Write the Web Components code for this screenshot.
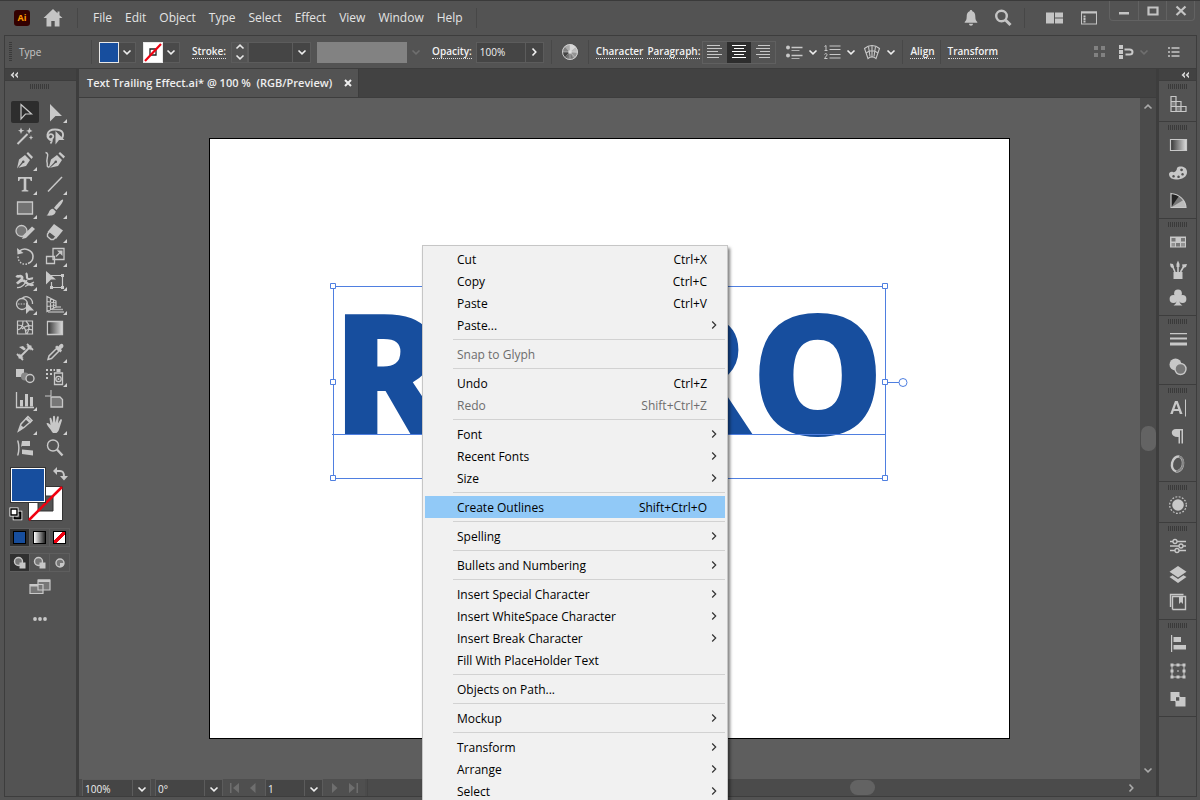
<!DOCTYPE html>
<html lang="en">
<head>
<meta charset="utf-8">
<title>Text Trailing Effect.ai</title>
<style>
html, body { margin: 0; height: 100%; overflow: hidden; background: #535353; }
body { font-family: "Open Sans", "Noto Sans", sans-serif; color: #e0e0e0; }
</style>
</head>
<body>
<ai-app>
  <ai-titlebar slot="title"></ai-titlebar>
  <ai-controlbar slot="controls"></ai-controlbar>
  <ai-toolbox slot="tools"></ai-toolbox>
  <ai-document slot="document">
    <ai-artwork></ai-artwork>
  </ai-document>
  <ai-dock slot="dock">
    <ai-dock-group icons="assets"></ai-dock-group>
    <ai-dock-group icons="gradient palette guide"></ai-dock-group>
    <ai-dock-group icons="swatches brushes symbols"></ai-dock-group>
    <ai-dock-group icons="strokes transparency"></ai-dock-group>
    <ai-dock-group icons="character paragraph opentype"></ai-dock-group>
    <ai-dock-group icons="appearance"></ai-dock-group>
    <ai-dock-group icons="properties layers libraries"></ai-dock-group>
    <ai-dock-group icons="alignpanel transformpanel pathfinder"></ai-dock-group>
  </ai-dock>
  <ai-context-menu slot="menu">
    <ai-menu-item keys="Ctrl+X">Cut</ai-menu-item>
    <ai-menu-item keys="Ctrl+C">Copy</ai-menu-item>
    <ai-menu-item keys="Ctrl+V">Paste</ai-menu-item>
    <ai-menu-item sub>Paste...</ai-menu-item>
    <ai-menu-line></ai-menu-line>
    <ai-menu-item disabled>Snap to Glyph</ai-menu-item>
    <ai-menu-line></ai-menu-line>
    <ai-menu-item keys="Ctrl+Z">Undo</ai-menu-item>
    <ai-menu-item keys="Shift+Ctrl+Z" disabled>Redo</ai-menu-item>
    <ai-menu-line></ai-menu-line>
    <ai-menu-item sub>Font</ai-menu-item>
    <ai-menu-item sub>Recent Fonts</ai-menu-item>
    <ai-menu-item sub>Size</ai-menu-item>
    <ai-menu-line></ai-menu-line>
    <ai-menu-item keys="Shift+Ctrl+O" active>Create Outlines</ai-menu-item>
    <ai-menu-line></ai-menu-line>
    <ai-menu-item sub>Spelling</ai-menu-item>
    <ai-menu-line></ai-menu-line>
    <ai-menu-item sub>Bullets and Numbering</ai-menu-item>
    <ai-menu-line></ai-menu-line>
    <ai-menu-item sub>Insert Special Character</ai-menu-item>
    <ai-menu-item sub>Insert WhiteSpace Character</ai-menu-item>
    <ai-menu-item sub>Insert Break Character</ai-menu-item>
    <ai-menu-item>Fill With PlaceHolder Text</ai-menu-item>
    <ai-menu-line></ai-menu-line>
    <ai-menu-item>Objects on Path...</ai-menu-item>
    <ai-menu-line></ai-menu-line>
    <ai-menu-item sub>Mockup</ai-menu-item>
    <ai-menu-line></ai-menu-line>
    <ai-menu-item sub>Transform</ai-menu-item>
    <ai-menu-item sub>Arrange</ai-menu-item>
    <ai-menu-item sub>Select</ai-menu-item>
  </ai-context-menu>
</ai-app>

<script>
const RESET = `
*, *::before { box-sizing: border-box; }
button, select, input { font: inherit; color: inherit; margin: 0; padding: 0; border: 0; background: none; border-radius: 0; outline: 0; }
button { display: flex; align-items: center; justify-content: center; }
`;

function define(name, css, html) {
  customElements.define(name, class extends HTMLElement {
    constructor() {
      super();
      const root = this.attachShadow({ mode: 'open' });
      const attr = (k) => this.getAttribute(k) || '';
      root.innerHTML = '<style>' + RESET + css + '</style>' + (typeof html === 'function' ? html(attr, this) : html);
    }
  });
}

const L = 'fill="none" stroke="currentColor"';
const GRAD = (id, a, b, rest) => `<linearGradient id="${id}" ${rest || ''}><stop offset="0" stop-color="${a}"/><stop offset="1" stop-color="${b}"/></linearGradient>`;

/* Every icon is drawn on a 22 x 22 grid. */
const ICONS = {
  home: '<path d="M11 2 1.500 11H4.500V19.500H9.300V14H12.700V19.500H17.500V11H20.500L17.500 8.200V4.500H15.500V6.300Z"/>',
  bell: '<path d="M11 3c.9 0 1.300.6 1.300 1.300C14.600 5 15.300 7 15.300 9.500c0 3 .7 4.200 2 5.500v.8H4.700V15c1.300-1.300 2-2.500 2-5.500C6.700 7 7.400 5 9.700 4.300 9.700 3.600 10.100 3 11 3ZM9 16.800h4c0 1.200-.8 2-2 2s-2-.8-2-2Z"/>',
  search: `<g ${L} stroke-width="2.400"><circle cx="9.500" cy="9" r="5.300"/><path d="M13.500 13 18.500 18" stroke-width="3"/></g>`,
  workspace: '<path d="M3 5.500h8v11H3zM12 5.500h8v5h-8zM12 11.500h8v5h-8z"/>',
  panel: `<rect x="3.500" y="5" width="15" height="12" ${L}/><path d="M3 4.500h16v2H3zM5.500 8.500h2v2h-2zM5.500 11h2v2h-2zM5.500 13.500h2v2h-2z"/>`,
  min: '<path d="M6 12h10v2.500H6z"/>',
  max: `<path d="M6.500 7.500h9v7h-9z" ${L} stroke-width="2.200"/>`,
  close: `<path d="M6.500 6.500 15.500 15M15.500 6.500 6.500 15" ${L} stroke-width="2.200"/>`,
  chev: `<path d="M7.500 9.500 11 12.800 14.500 9.500" ${L} stroke-width="1.600"/>`,
  up: `<path d="M7.500 12.500 11 9.200 14.500 12.500" ${L} stroke-width="1.600"/>`,
  right: `<path d="M9.500 7.500 12.800 11 9.500 14.500" ${L} stroke-width="1.600"/>`,
  arrow: `<path d="M9.200 7.500 12.700 11 9.200 14.500" ${L} stroke-width="1.200"/>`,
  stepper: `<path d="M7.500 7.500 11 4.200 14.500 7.500M7.500 14.500 11 17.800 14.500 14.500" ${L} stroke-width="1.600"/>`,
  collapse: '<path d="M11 7.800 7.500 11 11 14.200V12L9.800 11 11 10ZM15 7.800 11.500 11 15 14.200V12L13.800 11 15 10Z"/>',
  recolor: `<circle cx="11" cy="11" r="7.700" fill="#aaa"/><path d="M11 11 11 3.300A7.700 7.700 0 0 1 17 6.200Z" fill="#d8d8d8"/><path d="M11 11 17 6.200A7.700 7.700 0 0 1 18.600 12Z" fill="#bbb"/><path d="M11 11 18.600 12A7.700 7.700 0 0 1 14.500 17.800Z" fill="#959595"/><path d="M11 11 14.500 17.800A7.700 7.700 0 0 1 7 17.500Z" fill="#777"/><path d="M11 11 7 17.500A7.700 7.700 0 0 1 3.300 11Z" fill="#454545"/><path d="M11 11 3.300 11A7.700 7.700 0 0 1 6 5Z" fill="#818181"/><g fill="none" stroke="#d6d6d6" stroke-width=".9"><circle cx="11" cy="11" r="7.500"/><path d="M11 3.500v15M3.500 11h15M6 5.500 16 16.500M16 5.500 6 16.500" stroke-width=".5"/></g><circle cx="11" cy="11" r="1.800" fill="#ddd"/>`,
  left: `<path d="M3 4.500h13M3 7.500h15M3 10.500h11M3 13.500h15M3 16.500h12" ${L}/>`,
  center: `<path d="M4 4.500h14M6 7.500h10M4 10.500h14M6 13.500h10M4 16.500h14" ${L}/>`,
  rightal: `<path d="M6 4.500h12M4 7.500h14M8 10.500h10M4 13.500h14M7 16.500h11" ${L}/>`,
  bullets: `<circle cx="5" cy="6.500" r="2"/><circle cx="5" cy="14.500" r="2"/><path d="M8.500 6.500h11M8.500 14.500h11" ${L} stroke-width="1.500"/><path d="M8.500 9.500h8M8.500 17.500h8" ${L} stroke-width=".8"/>`,
  numbers: `<path d="M3.500 5.500 5 4.500V9.500M3.500 9.500h3M3.500 13.500c.5-1.500 3-1 2.500.6L3.500 17.500H6.500" ${L}/><path d="M8.500 5h11M8.500 8.500h11M8.500 13.500h11M8.500 17h11" ${L}/>`,
  envelope: `<g ${L} stroke-width="1.100"><path d="M3.500 7.500C8 3.500 14 3.500 18.500 7.500L15 17.500C12.500 15.500 9.500 15.500 7 17.500Z"/><path d="M5 12C9 9 13 9 17 12M11 4.500V16M7.500 5.500 9 15.500M14.500 5.500 13 15.500"/></g>`,
  dots4: '<g opacity=".4"><path d="M5 5h4v4H5zM12 5h4v4h-4zM5 12h4v4H5zM12 12h4v4h-4z"/></g>',
  snap: `<path d="M4 4h4v4H4zM4 9h4v4H4zM4 14h4v4H4z"/><path d="M9.500 8.500h5c4 0 4 5 0 5h-4" ${L} stroke-width="2"/>`,
  list: `<path d="M5 7h2M5 11h2M5 15h2M8.500 7h8M8.500 11h8M8.500 15h8" ${L} stroke-width="1.300"/>`,

  select: `<path d="M7 3.500 17.500 13H11.500L7 18Z" ${L} stroke-width="1.200"/>`,
  direct: '<path d="M6 3 18 15H11.500L6 20.500Z"/>',
  wand: `<path d="M3.500 19 13.500 9" ${L} stroke-width="2"/><path d="M7 2.500 8 5 10.500 5.500 8 6.500 7 9 6 6.500 4 5.500 6 5ZM15.500 2.500 16.500 5 18.500 6 16 7 15 9 14 6.500 12 6 14.500 5ZM17 10l.7 2 1.500.5-1.500.7-.7 1.800-.7-1.800-1.500-.7 1.500-.5Z"/>`,
  lasso: `<path d="M8 15.500C1 14 2 4.500 11 4.500S20 10 18 13.500M4.500 11C6 7.500 10.500 9.500 9 12.500S3 13.500 4.500 11M8 14c0 2 0 3.500-1.500 4.500" ${L} stroke-width="1.800"/><path d="M11.500 6 20.500 15H15L11.500 19.500Z"/>`,
  pen: '<path d="M3 19.500 5 10.500 11 6 16 11 12 17 4.500 18.800 9 14A1.300 1.300 0 1 0 8 13ZM12.500 4.500 14 3 19 8 17.500 10Z"/>',
  curve: `<path d="M1.500 3.500C6 4 2 10 3 13S2 18 5 18" ${L} stroke-width="1.400"/><path d="M4.500 19.500 7 10.500 13 6 18 11 14 17 6 18.800 11.500 14A1.300 1.300 0 1 0 10.500 13ZM14.500 4.500 16 3 21 7.500 19.500 9.500Z"/>`,
  type: '<path d="M4 4H18V8H16.700C16.500 6.300 16 5.700 14 5.700H12.300V16.300C12.300 17 13 17.300 14.300 17.300V18.500H7.700V17.300C9 17.300 9.700 17 9.700 16.300V5.700H8C6 5.700 5.500 6.300 5.300 8H4Z"/>',
  line: `<path d="M4 18.500 18 4" ${L} stroke-width="1.500"/>`,
  rect: `<path d="M3.500 5h15v12h-15z" fill="#737373" stroke="currentColor" stroke-width="1.300"/>`,
  brush: '<path d="M19 2.500C20 4 16 9.500 12.500 13L10 11C13 7 17.500 2 19 2.500ZM9 11.800 11.800 14.500C11 18.500 7 19 2.500 18.500 5.500 17 4.500 12 9 11.800Z"/>',
  shaper: `<circle cx="7.500" cy="10" r="5.500" fill="#777" stroke="currentColor" stroke-width="1.300"/><path d="M8 18 9.500 14 18 5.500 21 8 12 17Z"/>`,
  eraser: `<path d="M10 3 19 9.500 12 18 3.500 11Z"/><path d="M5.500 10.500 12 15.500 9.500 18.500H7L3.500 15.500V13Z" fill="#535353" stroke="currentColor" stroke-width="1.400"/>`,
  rotate: `<path d="M5 6.500C10 1.500 19 5 19 11.500c0 3-2 6-5 7" ${L} stroke-width="1.600"/><path d="M13 19C8 20 4 17 4 11" ${L} stroke-width="1.400" stroke-dasharray="1.500 1.500"/><path d="M3 3 3.500 9.500 9.500 8Z"/>`,
  scale: `<g ${L} stroke-width="1.300"><path d="M9 3.500h11v11H9zM2.500 11.500h8v7h-8z"/><path d="M12 11.500 16.500 7"/></g><path d="M13 5.500h5.500V11Z"/>`,
  width: `<path d="M2.500 6.500C4 9 6.500 5.500 8 8S5 12 3 14.500C7 11 9.500 11 11 12.500S15 17 19.500 15.500" ${L} stroke-width="2.600"/><path d="M12 4c2 2 0 4 1.500 5.500S17 9 19 9.500" ${L} stroke-width="2.200"/><path d="M3 18.500C7 19 10 17 13 11M11 17.500 20 13" ${L} stroke-width="1.300"/>`,
  free: `<path d="M7 6.500h11.500v12H7.500V13" ${L} stroke-width="1.200"/><path d="M17 5h3v3h-3zM17 17h3v3h-3zM6 17h3v3H6zM2 2 12 10.500H7L2 15.500Z"/>`,
  builder: `<g ${L} stroke-width="1.300"><circle cx="8" cy="11" r="5.500"/><path d="M8 5.500C12 1.500 19 5 18.500 11"/></g><path d="M4 11h9" ${L} stroke-dasharray="1.500 1.200"/><path d="M12 9 20 17.500H15.500L12 21Z"/>`,
  perspective: `<path d="M3 3.500 12 8V14L3 18.500ZM6.500 5v12M9.500 7v8M3 8.500 12 10M3 13.500 12 12" ${L} stroke-width="1.200"/><path d="M12 14h5M8 16.500h11M4 19h16" ${L} stroke-width="1.500" opacity=".75"/>`,
  mesh: `<g ${L} stroke-width="1.200"><path d="M3.500 4h15v13h-15z"/><path d="M3.500 13C8 12 9 8 9 4M3.500 8C8 8 12 10 12 17M12 4c4 4 4 8 1 13M8 12c3-3 7-4 10.500-3M11 14c3-2 5-2 7.500-1"/></g>`,
  gradtool: `<defs>${GRAD('g1', '#333', '#ddd')}</defs><path d="M3.500 4.500h15v13h-15z" fill="url(#g1)" stroke="currentColor" stroke-width="1.300"/>`,
  measure: `<path d="M5 17 17 5M3 13 9 19M13 3 19 9" ${L} stroke-width="1.800"/><path d="M4.500 17.500 5.500 12.500 9.500 16.500ZM17.500 4.500 12.500 5.500 16.500 9.500ZM5 6l4-1 3 3-2 1.500Z"/>`,
  dropper: `<path d="M4 18.500 5 15 12.500 7.500 15 10 7.500 17.500Z" ${L} stroke-width="1.500"/><path d="M11 6 13 4.500 14.500 5.500C16 2.500 18 2 19 3.500S19.500 6.500 17 8L18 9.500 16.500 11.500Z"/>`,
  blend: `<path d="M2 4h8v8H2z"/><circle cx="11" cy="11.500" r="4" fill="#888"/><circle cx="16" cy="13.500" r="4" fill="#535353" stroke="currentColor" stroke-width="1.400"/>`,
  spray: `<g ${L} stroke-width="1.300"><path d="M10.500 8h8v11.500h-8z"/><circle cx="14.500" cy="14" r="2.700"/></g><circle cx="14.500" cy="14" r="1"/><path d="M12.500 4h4v3h-4zM2 4h2v2H2zM6 4h2v2H6zM2 8h2v2H2zM6 8h2v2H6zM2 12h2v2H2zM9.500 4h1.500v2H9.500z"/>`,
  graph: `<path d="M2.500 3v15.500H20" ${L} stroke-width="1.300"/><path d="M6 11h3v6.500H6zM11 5h3v12.500h-3zM16 8h3v9.500h-3z"/>`,
  artboard: `<path d="M7 1v6H1" ${L}/><path d="M7 8h9l2.500 2.500V18H7Z" fill="#777" stroke="currentColor" stroke-width="1.300"/>`,
  slice: `<path d="M4.500 18 7 11 14 3.500 18 7.500 10 14.500Z" ${L} stroke-width="1.500"/><path d="M4 19 7 12.500 10 14.500Z"/><path d="m12 5 5 4.500" ${L} stroke-width="2.500"/>`,
  hand: '<path d="M6.500 16.500C4.500 14 3 12 2.500 10.500c1-1 2.500-.3 4 1.500L5.500 5.500c.5-1 1.700-.8 2 .3L8.800 10 9 3.500c.5-1.200 1.900-1 2 .2l.5 6 1.500-6c.6-.9 1.800-.6 1.800.6L14 10.500l2.300-4c.9-.7 1.900 0 1.600 1L15.500 15c-.5 2-1.500 4-3 5H9C8 19 7.500 18 6.500 16.500Z"/>',
  columns: '<path d="M3 3.500c1.500 5 1.500 10 0 15h1.500c1.500-5 1.500-10 0-15ZM8 4h8v5H8l-1 1ZM8 12.500l11 1V18.500L8 17Z"/>',
  zoom: `<circle cx="9" cy="8.500" r="5.500" ${L} stroke-width="1.400"/><path d="M13 12.500 18.500 18.500" ${L} stroke-width="2.300"/>`,
  swap: `<path d="M7 8h4c3 0 4 1.500 4 6" ${L} stroke-width="2"/><path d="M8 4v8L4 8ZM11 13h8l-4 4.500Z"/>`,
  defaults: `<path d="M9.500 9.500h6v6h-6z" fill="none" stroke="#fff" stroke-width="3.500"/><path d="M9.500 9.500h6v6h-6z" fill="#535353" stroke="#000" stroke-width="2"/><path d="M6 6h6v6H6z" fill="#fff" stroke="#fff" stroke-width="3"/><path d="M6 6h6v6H6z" fill="#fff" stroke="#000" stroke-width="1.400"/>`,
  normal: `<circle cx="9.500" cy="9.500" r="4" fill="#777" stroke="currentColor" stroke-width="1.400"/><path d="M10.500 10.500h6v6h-6z"/>`,
  inside: `<circle cx="11" cy="11" r="4" fill="#777" stroke="currentColor" stroke-width="1.400"/><path d="M11 11h4a4 4 0 0 1-4 4Z"/>`,
  screens: `<path d="M1 8.500h13v9H1zM9 4h12v10H9z" fill="#777" stroke="currentColor" stroke-width="1.200"/><path d="M1 8.500h8v2H1zM9 3.500h12V6H9z"/>`,
  more: '<circle cx="6" cy="11" r="1.900"/><circle cx="11" cy="11" r="1.900"/><circle cx="16" cy="11" r="1.900"/>',

  assets: `<path d="M4 3.500h5v5H4zM4 8.500h5v5H4zM9 8.500h5v5H9zM4 13.500h5v5H4zM9 13.500h5v5H9zM14 13.500h5v5h-5z" ${L} stroke-width="1.200"/><path d="M9 13.500h5v5H9zM4 8.500h5v5H4z" fill-opacity=".35"/>`,
  gradient: `<defs>${GRAD('g2', '#333', '#ddd')}</defs><path d="M3.500 5.500h16v11h-16z" fill="url(#g2)" stroke="currentColor" stroke-width="1.200"/>`,
  palette: '<path fill-rule="evenodd" d="M10 6C12 3.500 19.500 4 20 9.500S15 17.500 9 17.500 2 13.500 2 12s2-3 4-2 4-2 4-4ZM6.500 13a1.300 1.300 0 1 0 .1 0ZM11.500 13.500a1.300 1.300 0 1 0 .1 0ZM15.500 11a1.300 1.300 0 1 0 .1 0ZM14.500 6.500a1.400 1.400 0 1 0 .1 0Z"/>',
  guide: `<path d="M4 3.500C12 4 18.500 10 19 17.500H4Z" fill="#222"/><path d="M4 17.500 12 6C16 9 18.500 13 19 17.500Z" fill="#777"/><path d="M4 17.500 16.500 10C18 12 19 14 19 17.500Z" fill="#bbb"/><path d="M4 3.500C12 4 18.500 10 19 17.500H4Z" ${L} stroke-width="1.200"/>`,
  swatches: '<path d="M3 5.500h16v11H3z"/><path d="M4.500 7h4v3.500h-4zM14 7h4v3.500h-4zM9 12h4v3.500H9z" fill="#777"/><path d="M4.500 12h3.500v3.500H4.500zM14 12h4v3.500h-4z" fill="#929292"/>',
  brushes: `<path d="M6.500 13h9v7h-9z"/><path d="M8 13 5 6M11 13V5M13.500 13 17 7" ${L} stroke-width="1.600"/><path d="M3 4.500 6 5 7 8 5 9 3.500 7.500ZM9.500 5 11 1.500 12.500 5V8h-3ZM15 5.500 20 5 19 8 16 9Z"/>`,
  symbols: '<circle cx="11" cy="6.500" r="3.900"/><circle cx="6.500" cy="12" r="3.900"/><circle cx="15.500" cy="12" r="3.900"/><path d="M10 9h2c0 5 .5 8 3.500 9.500h-9C9.500 17 10 14 10 9Z"/>',
  strokes: '<path d="M3 5h17v1.200H3zM3 9.500h17v2H3zM3 14.500h17v3H3z"/>',
  transparency: `<circle cx="8.500" cy="8.500" r="6"/><circle cx="13.500" cy="13" r="5.500" fill="#777" stroke="currentColor" stroke-width="1.400"/>`,
  character: `<path fill-rule="evenodd" d="M8 4h2.700L15.500 17h-2.700l-1-3H6.700l-1 3H3.200ZM7.500 12h3.600L9.300 6.800Z"/><path d="M18.500 2.500v17" ${L}/>`,
  paragraph: '<path d="M9 4h7v14.500h-1.500V5.500H13V18.500H11.500V12C3 12.500 3 4 9 4Z"/>',
  opentype: `<ellipse cx="10.500" cy="11" rx="5.500" ry="7.500" transform="rotate(12 10.500 11)" ${L} stroke-width="2.400"/><path d="M12 3.500C18 5 18 17 9 18.500" fill="none" stroke="#858585" stroke-width="2"/>`,
  appearance: `<circle cx="11" cy="11" r="5.800"/><circle cx="11" cy="11" r="8.300" ${L} stroke-width="1.200" stroke-dasharray="1.800 1.500"/>`,
  properties: `<g ${L} stroke-width="1.300"><path d="M3 6.500h3M10 6.500h9M3 11h9M16 11h3M3 15.500h5M12 15.500h7"/><circle cx="8" cy="6.500" r="2"/><circle cx="14" cy="11" r="2"/><circle cx="10" cy="15.500" r="2"/></g>`,
  layers: '<path d="M11 3 19.500 8.700 11 14.400 2.500 8.700ZM5.500 12.300 11 16 16.500 12.300 19.500 14 11 20 2.500 14Z"/>',
  libraries: `<path d="M3.500 16V3.500h13M5.500 18.500V5.500h13v13h-13" ${L} stroke-width="1.400"/><path d="M12 6h4v7l-2-2-2 2Z"/>`,
  alignpanel: '<path d="M4 3h1.200v17H4zM6.500 5h7.500v5H6.500zM6.500 13H19v4.500H6.500z"/>',
  transformpanel: `<path d="M5 5h12v12H5z" ${L}/><path d="M3.500 3.500h3v3h-3zM9.500 3.500h3v3h-3zM15.500 3.500h3v3h-3zM3.500 9.500h3v3h-3zM15.500 9.500h3v3h-3zM3.500 15.500h3v3h-3zM9.500 15.500h3v3h-3zM15.500 15.500h3v3h-3zM10.300 10.300h1.400v1.400h-1.400z"/>`,
  pathfinder: `<path d="M3.500 4h9v9h-9zM8.500 9h10v9.500h-10z"/><path d="M8.500 8.700h4.300v4.500H8.500z" fill="#535353" stroke="#ddd" stroke-width=".8"/>`,
  first: '<path d="M6 6h1.500v10H6zM15 6v10l-6-5Z"/>',
  prev: '<path d="M13.500 6v10L8 11Z"/>',
  next: '<path d="M8 6v10l5.500-5Z"/>',
  last: '<path d="M7 6v10l6-5ZM14.500 6H16v10h-1.500z"/>'
};

define('ai-icon',
  ':host { display: block; flex: none; width: 22px; height: 22px; } svg { display: block; }',
  (a) => `<svg width="22" height="22" viewBox="0 0 22 22" fill="currentColor" aria-hidden="true">${ICONS[a('name')]}</svg>`);

define('ai-grip', `
:host { display: flex; justify-content: center; }
i { width: 20px; height: 5px; background: repeating-linear-gradient(90deg, #3a3a3a 0 1px, transparent 1px 2px); }
:host([vertical]) i { width: 3px; height: 20px; background: repeating-linear-gradient(#3a3a3a 0 1px, transparent 1px 2px); }
`, '<i></i>');

/* Drop-down with its value in one cell and the chevron in the next. */
define('ai-combo', `
:host { display: block; flex: none; height: 21px; font-size: 10px; }
div { display: grid; grid-template-columns: 1fr 18px; height: 100%; background: #454545; border: 1px solid #5c5c5c; }
select { grid-area: 1 / 1 / 2 / 3; appearance: none; padding: 0 20px 0 2px; color: #f0f0f0; }
span { grid-area: 1 / 2; border-left: 1px solid #5c5c5c; display: flex; align-items: center; justify-content: center; pointer-events: none; color: #eee; overflow: hidden; }
`, (a) => `<div><select aria-label="${a('label')}"><option>${a('value')}</option></select><span><ai-icon name="chev"></ai-icon></span></div>`);

define('ai-app', `
:host { display: grid; grid-template-rows: 34px 34px minmax(0, 1fr); height: 100vh; padding: 0 3px 3px 4px; position: relative; overflow: hidden; background: #535353; border-top: 1px solid #3a3a3a; box-sizing: border-box; }
main { display: grid; grid-template-columns: 71px minmax(0, 1fr) 37px; gap: 3px; background: #3d3d3d; border: 1px solid #3d3d3d; border-top: 0; min-height: 0; }
::slotted([slot=menu]) { position: absolute; left: 422px; top: 244px; }
`, '<slot name="title"></slot><slot name="controls"></slot><main><slot name="tools"></slot><slot name="document"></slot><slot name="dock"></slot></main><slot name="menu"></slot>');

define('ai-titlebar', `
:host { display: flex; align-items: center; height: 33px; padding-left: 10px; color: #c4c4c4; position: relative; box-sizing: border-box; }
.logo { width: 16px; height: 16px; border-radius: 3px; background: #330000; color: #ff9a00; font: bold 9px/16px "Open Sans", sans-serif; text-align: center; }
.home { margin-left: 12px; }
.rule { width: 1px; height: 20px; background: #474747; }
.rule.a { margin: 0 0 0 13px; }
nav { display: flex; gap: 13px; margin: 0 13px 0 15px; font-size: 12px; color: #e4e4e4; }
.space { flex: 1; }
.tools { display: flex; align-items: center; gap: 10px; margin-right: 97px; }
.tools .rule { margin-right: 8px; }
.tools button + button.wide { margin-left: 3px; }
.window { position: absolute; right: 2px; top: 0; display: grid; grid-template-columns: repeat(3, 28px); height: 20px; border: 1px solid #626262; border-top: 0; border-radius: 0 0 4px 4px; }
.window button { border-left: 1px solid #626262; height: 19px; overflow: hidden; }
.window button:first-child { border: 0; }
`, () => `
<span class="logo">Ai</span>
<button class="home" aria-label="Home"><ai-icon name="home"></ai-icon></button>
<span class="rule a"></span>
<nav>${['File', 'Edit', 'Object', 'Type', 'Select', 'Effect', 'View', 'Window', 'Help'].map((t) => `<button>${t}</button>`).join('')}</nav>
<span class="rule"></span><span class="space"></span>
<div class="tools"><button aria-label="Notifications"><ai-icon name="bell"></ai-icon></button><button aria-label="Search"><ai-icon name="search"></ai-icon></button><span class="rule"></span><button aria-label="Workspace"><ai-icon name="workspace"></ai-icon></button><button class="wide" aria-label="Panels"><ai-icon name="panel"></ai-icon></button></div>
<div class="window"><button aria-label="Minimize"><ai-icon name="min"></ai-icon></button><button aria-label="Maximize"><ai-icon name="max"></ai-icon></button><button aria-label="Close"><ai-icon name="close"></ai-icon></button></div>`);

define('ai-controlbar', `
:host { display: flex; align-items: center; height: 34px; padding-left: 4px; border: 1px solid #3d3d3d; font-size: 10px; color: #c8c8c8; box-sizing: border-box; }
.name { width: 79px; padding-left: 7px; }
.rule { width: 1px; height: 24px; background: #484848; margin: 0 7px; }
.name + .rule { margin: 0; }
.pair { display: flex; height: 21px; margin-left: 7px; }
.pair .swatch { width: 20px; border: 1px solid #e8e8e8; background: #174e9e; }
.pair .none { background: #fff; }
.none svg { display: block; }
.pair .drop { width: 17px; background: #4a4a4a; border: 1px solid #5c5c5c; border-left: 0; color: #eee; overflow: hidden; }
.lab { color: #f2f2f2; font-weight: 600; height: 14px; line-height: 13px; border-bottom: 1px dotted #e0e0e0; white-space: nowrap; }
.step { width: 17px; height: 21px; border: 1px solid #5c5c5c; margin-left: 5px; color: #e8e8e8; overflow: hidden; }
.gray { width: 90px; height: 21px; background: #828282; margin-left: 6px; }
.dim { display: flex; justify-content: center; color: #6f6f6f; width: 18px; overflow: hidden; }
.op { display: grid; grid-template-columns: 49px 17px; height: 21px; margin-left: 4px; border: 1px solid #5c5c5c; background: #454545; color: #f2f2f2; }
.op input { min-width: 0; padding-left: 3px; border-right: 1px solid #5c5c5c; }
.op button { overflow: hidden; }
.align { display: flex; margin-left: 2px; border: 1px solid #606060; height: 23px; }
.align button { width: 24px; overflow: hidden; }
.align .on { background: #2d2d2d; color: #fff; }
.more { display: flex; }
.more button + button { width: 16px; overflow: hidden; color: #eee; }
.space { flex: 1; }
`, `
<ai-grip vertical></ai-grip><span class="name">Type</span><span class="rule"></span>
<div class="pair"><button class="swatch" aria-label="Fill"></button><button class="drop" aria-label="Fill options"><ai-icon name="chev"></ai-icon></button></div>
<div class="pair"><button class="swatch none" aria-label="Stroke"><svg width="18" height="19" viewBox="0 0 18 19"><path d="M6 6h6v6H6z" fill="none" stroke="#222" stroke-width="1.300"/><path d="M1 18 17 1" stroke="#f00010" stroke-width="2.200"/></svg></button><button class="drop" aria-label="Stroke options"><ai-icon name="chev"></ai-icon></button></div>
<button class="lab" style="margin-left:12px">Stroke:</button>
<button class="step" aria-label="Stroke weight step"><ai-icon name="stepper"></ai-icon></button>
<ai-combo style="width:63px" label="Stroke weight" value=""></ai-combo>
<span class="gray"></span><span class="dim"><ai-icon name="chev"></ai-icon></span>
<button class="lab" style="margin-left:7px">Opacity:</button>
<div class="op"><input aria-label="Opacity" value="100%"><button aria-label="Opacity slider"><ai-icon name="right"></ai-icon></button></div>
<span class="rule"></span>
<button aria-label="Recolor"><ai-icon name="recolor"></ai-icon></button>
<span class="rule"></span>
<button class="lab">Character</button>
<button class="lab" style="margin-left:4px">Paragraph:</button>
<div class="align"><button aria-label="Align left"><ai-icon name="left"></ai-icon></button><button class="on" aria-label="Align center"><ai-icon name="center"></ai-icon></button><button aria-label="Align right"><ai-icon name="rightal"></ai-icon></button></div>
<div class="more" style="margin-left:7px"><button aria-label="Bullets"><ai-icon name="bullets"></ai-icon></button><button aria-label="Bullet options"><ai-icon name="chev"></ai-icon></button></div>
<div class="more"><button aria-label="Numbering"><ai-icon name="numbers"></ai-icon></button><button aria-label="Numbering options"><ai-icon name="chev"></ai-icon></button></div>
<div class="more" style="margin-left:2px"><button aria-label="Envelope"><ai-icon name="envelope"></ai-icon></button><button aria-label="Envelope options"><ai-icon name="chev"></ai-icon></button></div>
<span class="rule" style="margin-left:3px"></span>
<button class="lab">Align</button>
<span class="rule" style="margin-left:5px"></span>
<button class="lab">Transform</button>
<span class="space"></span>
<ai-icon name="dots4"></ai-icon>
<ai-icon name="snap" style="margin-left:4px"></ai-icon><span class="dim" style="width:14px"><ai-icon name="chev"></ai-icon></span>
<ai-icon name="list" style="margin:0 11px 0 12px"></ai-icon>`);

const TOOLS = ['select', 'direct', 'wand', 'lasso', 'pen', 'curve', 'type', 'line', 'rect', 'brush', 'shaper', 'eraser', 'rotate', 'scale', 'width', 'free', 'builder', 'perspective', 'mesh', 'gradtool', 'measure', 'dropper', 'blend', 'spray', 'graph', 'artboard', 'slice', 'hand', 'columns', 'zoom'];
const PLAIN = ['select', 'wand', 'lasso', 'curve', 'mesh', 'gradtool', 'measure', 'blend', 'artboard', 'columns', 'zoom'];

define('ai-toolbox', `
:host { display: block; background: #535353; color: #c8c8c8; min-width: 0; }
header { height: 12px; background: #424242; border-bottom: 1px solid #3d3d3d; overflow: hidden; display: flex; align-items: center; color: #d8d8d8; }
header ai-icon { margin-left: -2px; }
ai-grip { padding: 3px 2px 12px 0; }
.grid { display: grid; grid-template-columns: 28px 28px; gap: 2px; padding-left: 6px; }
.grid button { height: 22px; position: relative; border-radius: 2px; }
.grid .on { background: #2d2d2d; }
.grid .sub::before { content: ""; position: absolute; right: 2px; bottom: 0; border: 2px solid transparent; border-right-color: #d0d0d0; border-bottom-color: #d0d0d0; }
.colors { position: relative; height: 53px; margin: 9px 6px 0; }
.colors > * { position: absolute; }
.fill { left: 0; top: 0; width: 34px; height: 34px; background: #174e9e; border: 1px solid #fff; box-shadow: 0 0 0 1px #333; }
.stroke { left: 17px; top: 18px; }
.swap { left: 38px; top: -5px; }
.def { left: -6px; top: 35px; }
.row { display: grid; grid-template-columns: repeat(3, 20px); margin: 7px 5px 0; height: 19px; }
.row + .row { margin-top: 6px; }
.row button { border: 1px solid #5e5e5e; border-left: 0; overflow: hidden; }
.row .on { background: #303030; }
.chip { width: 13px; height: 13px; border: 1px solid #000; }
.one { width: 58px; height: 22px; margin: 4px 0 0 6px; }
.one.dots { margin-top: 10px; }
`, `
<header><ai-icon name="collapse"></ai-icon></header>
<ai-grip></ai-grip>
<div class="grid">${TOOLS.map((t) => `<button aria-label="${t} tool" class="${t === 'select' ? 'on' : PLAIN.includes(t) ? '' : 'sub'}"><ai-icon name="${t}"></ai-icon></button>`).join('')}</div>
<div class="colors">
  <button class="stroke" aria-label="Stroke color"><svg width="35" height="35" viewBox="0 0 35 35"><path d="M.5.5h34v34H.5z" fill="#fff" stroke="#333"/><path d="M10 10h15v15H10z" fill="#535353" stroke="#333"/><path d="M1 34 34 1" stroke="#f00010" stroke-width="2.500"/></svg></button>
  <button class="fill" aria-label="Fill color"></button>
  <button class="swap" aria-label="Swap fill and stroke"><ai-icon name="swap"></ai-icon></button>
  <button class="def" aria-label="Default fill and stroke"><ai-icon name="defaults"></ai-icon></button>
</div>
<div class="row"><button class="on" aria-label="Color"><span class="chip" style="background:#174e9e"></span></button><button aria-label="Gradient"><span class="chip" style="background:linear-gradient(90deg,#fff,#222)"></span></button><button aria-label="None"><span class="chip" style="background:linear-gradient(to bottom right,#fff 38%,#f00010 38% 62%,#fff 62%)"></span></button></div>
<div class="row"><button class="on" aria-label="Draw normal"><ai-icon name="normal"></ai-icon></button><button aria-label="Draw behind"><ai-icon name="normal"></ai-icon></button><button aria-label="Draw inside"><ai-icon name="inside"></ai-icon></button></div>
<button class="one" aria-label="Screen mode"><ai-icon name="screens"></ai-icon></button>
<button class="one dots" aria-label="Edit toolbar"><ai-icon name="more"></ai-icon></button>`);

define('ai-document', `
:host { display: grid; grid-template-rows: 29px minmax(0, 1fr) 17px; background: #424242; min-width: 0; min-height: 0; }
.tabs { display: flex; border-bottom: 1px solid #3d3d3d; }
.tab { display: flex; align-items: center; gap: 8px; background: #535353; padding: 0 2px 1px 8px; font-size: 11px; font-weight: 600; color: #eee; border-right: 1px solid #3d3d3d; white-space: pre; }
.tab button { width: 16px; height: 16px; }
.view { display: grid; grid-template-columns: minmax(0, 1fr) 16px; min-height: 0; }
.canvas { background: #5e5e5e; display: flex; align-items: center; justify-content: center; overflow: hidden; }
.vbar { background: #4b4b4b; display: flex; flex-direction: column; align-items: center; color: #aaa; min-width: 0; }
.vbar ai-icon { height: 18px; display: flex; align-items: center; }
.vbar i { width: 15px; height: 25px; border-radius: 7px; background: #636363; }
.vbar b { flex: 1; }
.status { display: flex; background: #4b4b4b; color: #aaa; overflow: hidden; padding-left: 3px; }
.status ai-combo { height: 19px; }
.nav { display: flex; width: 42px; justify-content: center; background: #4f4f4f; color: #6e6e6e; overflow: hidden; }
.nav button { width: 18px; height: 17px; overflow: hidden; }
.track { flex: 1; display: flex; align-items: center; border-left: 1px solid #444; margin-left: 2px; padding-right: 14px; overflow: hidden; }
.track i { width: 25px; height: 15px; border-radius: 8px; background: #636363; }
`, `
<div class="tabs" role="tablist"><div class="tab" role="tab"><span>Text Trailing Effect.ai* @ 100 %  (RGB/Preview)</span><button aria-label="Close document"><svg width="8" height="8" viewBox="0 0 8 8"><path d="M1 1 7 7M7 1 1 7" stroke="#eee" stroke-width="2"/></svg></button></div></div>
<div class="view"><div class="canvas"><slot></slot></div><div class="vbar"><ai-icon name="up"></ai-icon><b></b><i></i><b></b><ai-icon name="chev"></ai-icon></div></div>
<div class="status">
<ai-combo style="width:69px" label="Zoom" value="100%"></ai-combo>
<ai-combo style="width:68px;margin-left:4px" label="Rotation" value="0°"></ai-combo>
<div class="nav"><button aria-label="First"><ai-icon name="first"></ai-icon></button><button aria-label="Previous"><ai-icon name="prev"></ai-icon></button></div>
<ai-combo style="width:58px" label="Artboard" value="1"></ai-combo>
<div class="nav"><button aria-label="Next"><ai-icon name="next"></ai-icon></button><button aria-label="Last"><ai-icon name="last"></ai-icon></button></div>
<div class="track"><b style="flex:483"></b><i></i><b style="flex:245"></b><ai-icon name="right"></ai-icon></div>
</div>`);

define('ai-artwork', `
:host { display: block; flex: none; width: 801px; height: 601px; background: #fff; border: 1px solid #000; position: relative; box-sizing: border-box; }
.sel { position: absolute; left: 120px; top: 143px; }
.sel svg { display: block; position: relative; }
.word { position: absolute; left: 2px; top: 4px; font-family: "Open Sans", "Noto Sans", sans-serif; font-size: 168px; line-height: 167px; font-weight: 800; color: #174e9e; white-space: nowrap; }
`, `
<div class="sel"><span class="word">RETRO</span>
<svg width="580" height="202" viewBox="0 0 580 202" fill="none" stroke="#4f7fe0"><path d="M3.500 4.500h552v192h-552zM2 152.500h554M556 100.500h14"/><g fill="#fff"><path d="M.5 1.500h5v5h-5zM.5 97.500h5v5h-5zM.5 193.500h5v5h-5zM552.500 1.500h5v5h-5zM552.500 97.500h5v5h-5zM552.500 193.500h5v5h-5z"/><circle cx="573" cy="100.500" r="4"/></g></svg></div>`);

define('ai-dock', `
:host { display: block; background: #535353; min-width: 0; }
header { height: 12px; background: #424242; border-bottom: 1px solid #3d3d3d; overflow: hidden; display: flex; align-items: center; justify-content: flex-end; color: #d8d8d8; }
`, '<header><ai-icon name="collapse"></ai-icon></header><slot></slot>');

define('ai-dock-group', `
:host { display: block; border-bottom: 1px solid #3d3d3d; padding-bottom: 3px; color: #c8c8c8; }
ai-grip { height: 9px; padding-top: 3px; }
button { width: 100%; height: 28px; }
`, (a) => '<ai-grip></ai-grip>' + a('icons').split(' ').map((n) => `<button aria-label="${n}"><ai-icon name="${n}"></ai-icon></button>`).join(''));

define('ai-context-menu', `
:host { display: block; width: 306px; padding: 2px; background: #f1f1f1; border: 1px solid #c6c6c6; box-shadow: 2px 3px 3px rgba(0,0,0,.5); color: #000; font-size: 12px; box-sizing: border-box; }
`, '<div role="menu"><slot></slot></div>');

define('ai-menu-item', `
:host { display: block; }
button { width: 100%; height: 22px; padding: 0 0 0 32px; justify-content: flex-start; }
.label { flex: 1; text-align: left; }
.keys { padding-right: 18px; }
:host([disabled]) button { color: #6d6d6d; }
:host([active]) button { background: #91c9f7; }
ai-icon { color: #333; }
`, (a, el) => `<button role="menuitem"${el.hasAttribute('disabled') ? ' disabled' : ''}><span class="label"><slot></slot></span>${a('keys') ? `<span class="keys">${a('keys')}</span>` : ''}${el.hasAttribute('sub') ? '<ai-icon name="arrow"></ai-icon>' : ''}</button>`);

define('ai-menu-line', ':host { display: block; height: 7px; padding: 3px 0 0 28px; box-sizing: border-box; } i { display: block; height: 1px; background: #d2d2d2; }', '<i></i>');
</script>
</body>
</html>
